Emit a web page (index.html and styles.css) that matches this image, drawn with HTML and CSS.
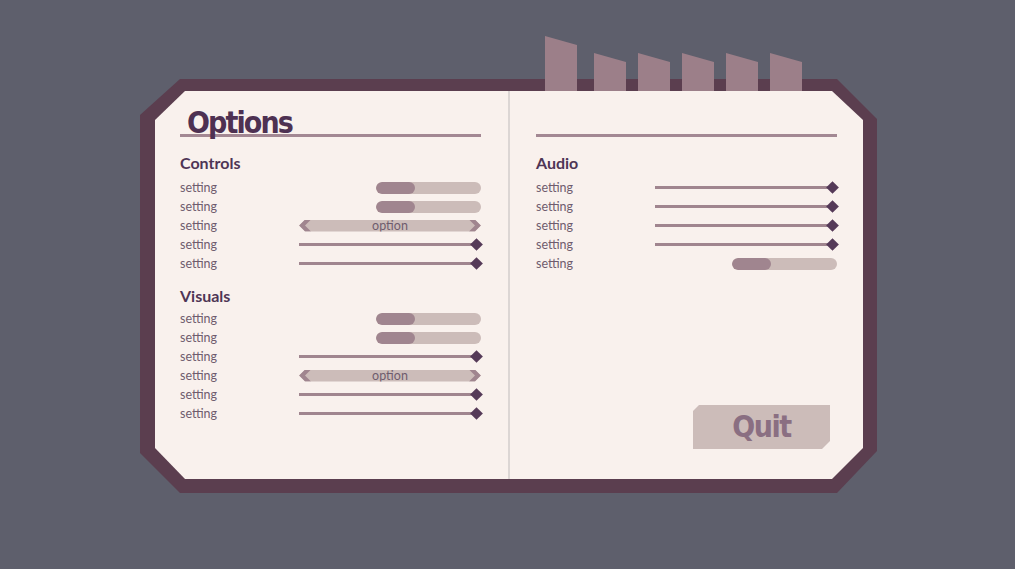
FILE: index.html
```html
<!DOCTYPE html>
<html>
<head>
<meta charset="utf-8">
<link rel="stylesheet" href="styles.css">
</head>
<body>
<div class="stage">
  <div class="book">
    <div class="page">
      <section class="col col-left">
        <div class="head"><h1 class="title">Options</h1></div>
        <h2 class="sect">Controls</h2>
        <div class="rows">
          <div class="row"><span class="label">setting</span><div class="toggle"><span class="fill"></span></div></div>
          <div class="row"><span class="label">setting</span><div class="toggle"><span class="fill"></span></div></div>
          <div class="row"><span class="label">setting</span><div class="option"><span class="opt-text">option</span></div></div>
          <div class="row"><span class="label">setting</span><div class="slider"><span class="thumb"></span></div></div>
          <div class="row"><span class="label">setting</span><div class="slider"><span class="thumb"></span></div></div>
        </div>
        <h2 class="sect sect-second">Visuals</h2>
        <div class="rows rows-second">
          <div class="row"><span class="label">setting</span><div class="toggle"><span class="fill"></span></div></div>
          <div class="row"><span class="label">setting</span><div class="toggle"><span class="fill"></span></div></div>
          <div class="row"><span class="label">setting</span><div class="slider"><span class="thumb"></span></div></div>
          <div class="row"><span class="label">setting</span><div class="option"><span class="opt-text">option</span></div></div>
          <div class="row"><span class="label">setting</span><div class="slider"><span class="thumb"></span></div></div>
          <div class="row"><span class="label">setting</span><div class="slider"><span class="thumb"></span></div></div>
        </div>
      </section>
      <div class="divider"></div>
      <section class="col col-right">
        <div class="head"></div>
        <h2 class="sect">Audio</h2>
        <div class="rows">
          <div class="row"><span class="label">setting</span><div class="slider"><span class="thumb"></span></div></div>
          <div class="row"><span class="label">setting</span><div class="slider"><span class="thumb"></span></div></div>
          <div class="row"><span class="label">setting</span><div class="slider"><span class="thumb"></span></div></div>
          <div class="row"><span class="label">setting</span><div class="slider"><span class="thumb"></span></div></div>
          <div class="row"><span class="label">setting</span><div class="toggle"><span class="fill"></span></div></div>
        </div>
        <div class="quit-wrap"><button class="quit">Quit</button></div>
      </section>
    </div>
  </div>
  <div class="tabs">
    <span class="tab tab-tall"></span>
    <span class="tab"></span>
    <span class="tab"></span>
    <span class="tab"></span>
    <span class="tab"></span>
    <span class="tab"></span>
  </div>
</div>
</body>
</html>
```
FILE: styles.css
```css
html, body {
  margin: 0;
  padding: 0;
}
body {
  background: #5e5f6c;
  width: 1015px;
  height: 569px;
  overflow: hidden;
  font-family: Lato, "Open Sans", sans-serif;
}
.stage {
  position: relative;
  width: 737px;
  margin: 79px 0 0 140px;
}
.book {
  width: 737px;
  height: 414px;
  box-sizing: border-box;
  padding: 12px 14px 14px 15px;
  background: #5b3e4f;
  clip-path: polygon(40px 0, calc(100% - 40px) 0, 100% 40px, 100% calc(100% - 42px), calc(100% - 40px) 100%, 40px 100%, 0 calc(100% - 40px), 0 36px);
}
.page {
  height: 100%;
  background: #f9f1ed;
  display: grid;
  grid-template-columns: 353px 2px 1fr;
  clip-path: polygon(30px 0, calc(100% - 31px) 0, 100% 29px, 100% calc(100% - 31px), calc(100% - 31px) 100%, 30px 100%, 0 calc(100% - 31px), 0 29px);
}
.divider {
  background: #dcd6d4;
}
.col {
  display: flex;
  flex-direction: column;
  min-width: 0;
}
.col-left {
  padding: 0 27px 0 25px;
}
.col-right {
  padding: 0 26px 0 26px;
}
.head {
  height: 43px;
  border-bottom: 3px solid #a38893;
  display: flex;
  align-items: flex-end;
  flex: none;
}
.title {
  margin: 0 0 -4px 7px;
  font-family: "DejaVu Sans Condensed", "DejaVu Sans", sans-serif;
  font-stretch: condensed;
  font-weight: bold;
  font-size: 30px;
  line-height: 30px;
  letter-spacing: -1.9px;
  color: #4e3152;
}
.sect {
  margin: 16px 0 5px 0;
  font-size: 16px;
  line-height: 20px;
  font-weight: bold;
  color: #4e3555;
}
.sect-second {
  margin: 13px 0 3px 0;
}
.rows {
  display: flex;
  flex-direction: column;
}
.row {
  height: 19px;
  display: flex;
  align-items: center;
  justify-content: space-between;
}
.label {
  font-size: 12.5px;
  color: #6f5c6e;
  line-height: 19px;
}
.toggle {
  width: 105px;
  height: 12px;
  border-radius: 6px;
  background: #ccbcb9;
  display: flex;
  overflow: hidden;
}
.fill {
  width: 39px;
  height: 12px;
  border-radius: 6px;
  background: #a0858f;
}
.option {
  position: relative;
  width: 182px;
  height: 12px;
  background: #ccbcb9;
  clip-path: polygon(0 50%, 6px 0, calc(100% - 6px) 0, 100% 50%, calc(100% - 6px) 100%, 6px 100%);
  display: flex;
  align-items: center;
  justify-content: center;
}
.option::before,
.option::after {
  content: "";
  position: absolute;
  top: 0;
  width: 12px;
  height: 12px;
  background: #a0858f;
}
.option::before {
  left: 0;
  clip-path: polygon(0 50%, 6px 0, 12px 0, 6px 50%, 12px 100%, 6px 100%);
}
.option::after {
  right: 0;
  clip-path: polygon(100% 50%, 6px 0, 0 0, 6px 50%, 0 100%, 6px 100%);
}
.opt-text {
  font-size: 12.5px;
  color: #6f5c6e;
  line-height: 12px;
}
.slider {
  position: relative;
  width: 182px;
  height: 13px;
}
.slider::before {
  content: "";
  position: absolute;
  left: 0;
  right: 4px;
  top: 5px;
  height: 3px;
  background: #a0858f;
}
.thumb {
  position: absolute;
  right: 0;
  top: 2px;
  width: 9px;
  height: 9px;
  background: #553a58;
  transform: rotate(45deg);
}
.quit-wrap {
  margin-top: auto;
  padding: 0 7px 30px 0;
  display: flex;
  justify-content: flex-end;
}
.quit {
  width: 137px;
  height: 44px;
  border: 0;
  padding: 0;
  background: #ccbcb9;
  clip-path: polygon(6px 0, 100% 0, 100% calc(100% - 8px), calc(100% - 8px) 100%, 0 100%, 0 6px);
  font-family: "DejaVu Sans Condensed", "DejaVu Sans", sans-serif;
  font-stretch: condensed;
  font-weight: bold;
  font-size: 30px;
  letter-spacing: -1.5px;
  color: #8a6f82;
  line-height: 44px;
}
.tabs {
  position: absolute;
  left: 405px;
  top: -43px;
  height: 55px;
  display: flex;
  align-items: flex-end;
  gap: 12px;
}
.tab {
  width: 32px;
  height: 38px;
  background: #9c7f89;
  clip-path: polygon(0 0, 100% 9px, 100% 100%, 0 100%);
}
.tab-tall {
  height: 55px;
  margin-right: 5px;
}
```
